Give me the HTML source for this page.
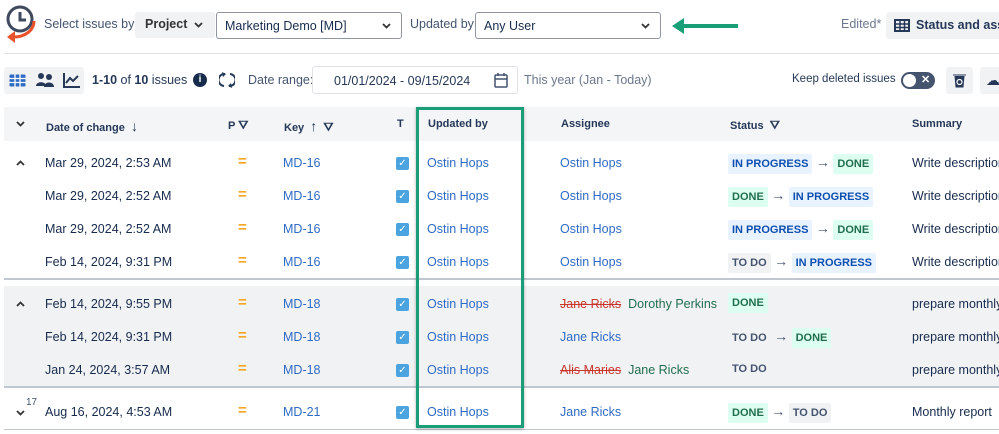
<!DOCTYPE html><html><head><style>
*{box-sizing:border-box;margin:0;padding:0}
body{width:999px;height:434px;overflow:hidden;background:#fff;font-family:"Liberation Sans",sans-serif;font-size:12.5px;color:#172b4d;position:relative}
.a{position:absolute;white-space:nowrap}
.lnk{color:#2f6bc4}
.dd{border:1px solid #8f96a3;border-radius:3px;height:27px;background:#fff}
.hd{font-weight:bold;font-size:11px;color:#253858}
.eq{color:#f5a623;font-weight:bold;font-size:15px}
.cb{width:13px;height:13px;background:#4ba4e0;border-radius:2px;color:#fff;font-size:10px;line-height:13px;text-align:center}
.lz{font-size:11px;font-weight:bold;padding:4px 4px;border-radius:2px}
.ip{background:#e9f2ff;color:#0c4fb0}
.dn{background:#dcfff1;color:#216e4e}
.td{background:#f1f2f4;color:#44546f}
.arr{color:#44546f;font-size:14px}
.strike{color:#c9372c;text-decoration:line-through}
.grn{color:#216e4e}
.pl{top:-2px}
</style></head><body>
<svg class="a" style="left:3px;top:3px" width="36" height="44" viewBox="0 0 36 44"><circle cx="17" cy="16" r="12" fill="none" stroke="#3f4a5e" stroke-width="3"/><path d="M17 9v8h6" stroke="#3f4a5e" stroke-width="3" fill="none"/><path d="M31 18c0 10-10 16-20 16" stroke="#e8532b" stroke-width="3" fill="none"/><path d="M4 34l8-6v12z" fill="#e8532b"/></svg>
<div class="a" style="left:44px;top:17px;color:#44546f">Select issues by:</div>
<div class="a" style="left:135px;top:12px;width:80px;height:26px;background:#f1f2f4;border-radius:3px"><span class="a" style="left:10px;top:5px;font-weight:bold;color:#333">Project</span><svg class="a" style="left:59px;top:10px" width="9" height="6"><path d="M1 1l3.5 3.5L8 1" stroke="#333" stroke-width="1.8" fill="none"/></svg></div>
<div class="a dd" style="left:216px;top:12px;width:186px"><span class="a" style="left:8px;top:6px">Marketing Demo [MD]</span><svg class="a" style="left:165px;top:10px" width="9" height="6"><path d="M1 1l3.5 3.5L8 1" stroke="#333" stroke-width="1.8" fill="none"/></svg></div>
<div class="a" style="left:410px;top:17px;color:#44546f">Updated by:</div>
<div class="a dd" style="left:475px;top:12px;width:186px"><span class="a" style="left:8px;top:6px">Any User</span><svg class="a" style="left:165px;top:10px" width="9" height="6"><path d="M1 1l3.5 3.5L8 1" stroke="#333" stroke-width="1.8" fill="none"/></svg></div>
<svg class="a" style="left:670px;top:16px" width="70" height="20"><path d="M10 10H68" stroke="#1a9e77" stroke-width="4"/><path d="M2 10l12-8v16z" fill="#1a9e77"/></svg>
<div class="a" style="left:841px;top:17px;color:#6b778c">Edited*</div>
<div class="a" style="left:886px;top:12px;width:120px;height:27px;background:#f1f2f4;border-radius:3px"><svg class="a" style="left:8px;top:7px" width="16" height="13"><rect x="1" y="1" width="14" height="11" fill="none" stroke="#253858" stroke-width="2"/><path d="M1 5h14M1 8.5h14M6 1v11M10.5 1v11" stroke="#253858" stroke-width="1.5"/></svg><span class="a" style="left:30px;top:6px;font-weight:bold;color:#253858">Status and assi</span></div>
<div class="a" style="left:4px;top:53px;width:995px;height:1px;background:#dfe1e6"></div>
<div class="a" style="left:4px;top:67px;width:80px;height:27px;background:#f1f2f4;border-radius:3px"></div>
<svg class="a" style="left:9px;top:74px" width="17" height="13"><rect x="0.5" y="0.5" width="16" height="12" rx="1" fill="#2f6bc4"/><path d="M0 4.5h17M0 8.5h17M6 0v13M11 0v13" stroke="#fff" stroke-width="1.3"/></svg>
<svg class="a" style="left:36px;top:72px" width="18" height="16"><circle cx="5" cy="4" r="3" fill="#253858"/><circle cx="13" cy="5" r="3" fill="#253858"/><path d="M0 14c0-5 10-5 10 0zM8 15c0-6 10-6 10 0z" fill="#253858"/></svg>
<svg class="a" style="left:63px;top:72px" width="18" height="16"><path d="M1 1v14h16" stroke="#253858" stroke-width="2" fill="none"/><path d="M3 11l4-5 3 3 5-5" stroke="#253858" stroke-width="2" fill="none"/></svg>
<div class="a" style="left:92px;top:73px;color:#253858"><b>1-10</b> of <b>10</b> issues</div>
<div class="a" style="left:193px;top:73px;width:14px;height:14px;border-radius:50%;background:#172b4d;color:#fff;font-size:10px;font-weight:bold;text-align:center;line-height:14px">i</div>
<svg class="a" style="left:219px;top:71px" width="16" height="18"><path d="M6 3A6 6 0 0 0 5 15M10 15A6 6 0 0 0 11 3" stroke="#253858" stroke-width="2" fill="none"/><path d="M3 1l4 2-3 3zM13 17l-4-2 3-3z" fill="#253858"/></svg>
<div class="a" style="left:248px;top:73px;color:#44546f">Date range:</div>
<div class="a" style="left:312px;top:66px;width:206px;height:28px;border:1px solid #dfe1e6;border-radius:3px"><span class="a" style="left:21px;top:7px;color:#253858">01/01/2024 - 09/15/2024</span><svg class="a" style="left:181px;top:6px" width="14" height="15"><rect x="1" y="2" width="12" height="12" rx="1" fill="none" stroke="#44546f" stroke-width="1.5"/><path d="M1 6h12M4 0v3M10 0v3" stroke="#44546f" stroke-width="1.5"/></svg></div>
<div class="a" style="left:524px;top:73px;color:#6b778c">This year (Jan - Today)</div>
<div class="a" style="left:792px;top:73px;color:#253858;font-size:11.5px">Keep deleted issues</div>
<div class="a" style="left:901px;top:72px;width:34px;height:17px;border-radius:9px;background:#44546f"><div class="a" style="left:2px;top:2px;width:13px;height:13px;border-radius:50%;background:#fff"></div><span class="a" style="left:20px;top:1px;color:#fff;font-size:11px;font-weight:bold">✕</span></div>
<div class="a" style="left:946px;top:67px;width:27px;height:27px;background:#f1f2f4;border-radius:3px"><svg class="a" style="left:7px;top:6px" width="13" height="15"><path d="M0 2h13M2 3l1 11h7l1-11" fill="#253858" stroke="#253858"/><circle cx="6.5" cy="9" r="2.5" fill="none" stroke="#fff" stroke-width="1.2"/></svg></div>
<div class="a" style="left:980px;top:67px;width:27px;height:27px;background:#f1f2f4;border-radius:3px"><span class="a" style="left:6px;top:5px;font-size:14px;color:#253858">☁</span></div>
<div class="a" style="left:4px;top:107px;width:995px;height:34px;background:#f4f5f7"></div>
<svg class="a" style="left:16px;top:121px" width="9" height="6"><path d="M1 1l3.5 3.5L8 1" stroke="#333" stroke-width="1.8" fill="none"/></svg>
<div class="a hd" style="left:46px;top:118px">Date of change&nbsp;&nbsp;<span style="font-size:14px">↓</span></div>
<div class="a hd" style="left:228px;top:118px">P <span style="font-size:12px">⛛</span></div>
<div class="a hd" style="left:284px;top:118px">Key&nbsp;&nbsp;<span style="font-size:14px">↑</span>&nbsp; <span style="font-size:12px">⛛</span></div>
<div class="a hd" style="left:397px;top:118px">T</div>
<div class="a hd" style="left:428px;top:118px">Updated by</div>
<div class="a hd" style="left:561px;top:118px">Assignee</div>
<div class="a hd" style="left:730px;top:118px">Status&nbsp; <span style="font-size:12px">⛛</span></div>
<div class="a hd" style="left:912px;top:118px">Summary</div>
<div class="a" style="left:4px;top:278px;width:995px;height:2px;background:#c1c7d0"></div>
<div class="a" style="left:4px;top:286px;width:995px;height:101px;background:#f1f2f4"></div>
<div class="a" style="left:4px;top:386px;width:995px;height:2px;background:#c1c7d0"></div>
<div class="a" style="left:4px;top:429px;width:995px;height:1px;background:#c1c7d0"></div>

<div class="a" style="top:156px;left:0;width:999px">
<svg class="a" style="left:16px;top:4px" width="9" height="6"><path d="M1 5l3.5-3.5L8 5" stroke="#333" stroke-width="1.8" fill="none"/></svg>
<span class="a" style="left:45px">Mar 29, 2024, 2:53 AM</span><span class="a eq" style="left:238px;top:-3px">=</span><span class="a lnk" style="left:283px">MD-16</span><span class="a cb" style="left:396px;top:1px">✓</span><span class="a lnk" style="left:427px">Ostin Hops</span><span class="a lnk" style="left:560px">Ostin Hops</span>
<span class="a pl" style="left:728px"><span class="lz ip">IN PROGRESS</span> <span class="arr">→</span> <span class="lz dn">DONE</span></span><span class="a" style="left:912px">Write description</span></div>
<div class="a" style="top:189px;left:0;width:999px">
<span class="a" style="left:45px">Mar 29, 2024, 2:52 AM</span><span class="a eq" style="left:238px;top:-3px">=</span><span class="a lnk" style="left:283px">MD-16</span><span class="a cb" style="left:396px;top:1px">✓</span><span class="a lnk" style="left:427px">Ostin Hops</span><span class="a lnk" style="left:560px">Ostin Hops</span>
<span class="a pl" style="left:728px"><span class="lz dn">DONE</span> <span class="arr">→</span> <span class="lz ip">IN PROGRESS</span></span><span class="a" style="left:912px">Write description</span></div>
<div class="a" style="top:222px;left:0;width:999px">
<span class="a" style="left:45px">Mar 29, 2024, 2:52 AM</span><span class="a eq" style="left:238px;top:-3px">=</span><span class="a lnk" style="left:283px">MD-16</span><span class="a cb" style="left:396px;top:1px">✓</span><span class="a lnk" style="left:427px">Ostin Hops</span><span class="a lnk" style="left:560px">Ostin Hops</span>
<span class="a pl" style="left:728px"><span class="lz ip">IN PROGRESS</span> <span class="arr">→</span> <span class="lz dn">DONE</span></span><span class="a" style="left:912px">Write description</span></div>
<div class="a" style="top:255px;left:0;width:999px">
<span class="a" style="left:45px">Feb 14, 2024, 9:31 PM</span><span class="a eq" style="left:238px;top:-3px">=</span><span class="a lnk" style="left:283px">MD-16</span><span class="a cb" style="left:396px;top:1px">✓</span><span class="a lnk" style="left:427px">Ostin Hops</span><span class="a lnk" style="left:560px">Ostin Hops</span>
<span class="a pl" style="left:728px"><span class="lz td">TO DO</span> <span class="arr">→</span> <span class="lz ip">IN PROGRESS</span></span><span class="a" style="left:912px">Write description</span></div>
<div class="a" style="top:297px;left:0;width:999px">
<svg class="a" style="left:16px;top:4px" width="9" height="6"><path d="M1 5l3.5-3.5L8 5" stroke="#333" stroke-width="1.8" fill="none"/></svg>
<span class="a" style="left:45px">Feb 14, 2024, 9:55 PM</span><span class="a eq" style="left:238px;top:-3px">=</span><span class="a lnk" style="left:283px">MD-18</span><span class="a cb" style="left:396px;top:1px">✓</span><span class="a lnk" style="left:427px">Ostin Hops</span><span class="a" style="left:560px"><span class="strike">Jane Ricks</span>&nbsp;&nbsp;<span class="grn">Dorothy Perkins</span></span>
<span class="a pl" style="left:728px"><span class="lz dn">DONE</span></span><span class="a" style="left:912px">prepare monthly</span></div>
<div class="a" style="top:330px;left:0;width:999px">
<span class="a" style="left:45px">Feb 14, 2024, 9:31 PM</span><span class="a eq" style="left:238px;top:-3px">=</span><span class="a lnk" style="left:283px">MD-18</span><span class="a cb" style="left:396px;top:1px">✓</span><span class="a lnk" style="left:427px">Ostin Hops</span><span class="a lnk" style="left:560px">Jane Ricks</span>
<span class="a pl" style="left:728px"><span class="lz td">TO DO</span> <span class="arr">→</span> <span class="lz dn">DONE</span></span><span class="a" style="left:912px">prepare monthly</span></div>
<div class="a" style="top:363px;left:0;width:999px">
<span class="a" style="left:45px">Jan 24, 2024, 3:57 AM</span><span class="a eq" style="left:238px;top:-3px">=</span><span class="a lnk" style="left:283px">MD-18</span><span class="a cb" style="left:396px;top:1px">✓</span><span class="a lnk" style="left:427px">Ostin Hops</span><span class="a" style="left:560px"><span class="strike">Alis Maries</span>&nbsp;&nbsp;<span class="grn">Jane Ricks</span></span>
<span class="a pl" style="left:728px"><span class="lz td">TO DO</span></span><span class="a" style="left:912px">prepare monthly</span></div>
<div class="a" style="top:405px;left:0;width:999px">
<svg class="a" style="left:16px;top:5px" width="9" height="6"><path d="M1 1l3.5 3.5L8 1" stroke="#333" stroke-width="1.8" fill="none"/></svg><span class="a" style="left:26px;top:-8px;font-size:10px;color:#44546f">17</span>
<span class="a" style="left:45px">Aug 16, 2024, 4:53 AM</span><span class="a eq" style="left:238px;top:-3px">=</span><span class="a lnk" style="left:283px">MD-21</span><span class="a cb" style="left:396px;top:1px">✓</span><span class="a lnk" style="left:427px">Ostin Hops</span><span class="a lnk" style="left:560px">Jane Ricks</span>
<span class="a pl" style="left:728px"><span class="lz dn">DONE</span> <span class="arr">→</span> <span class="lz td">TO DO</span></span><span class="a" style="left:912px">Monthly report</span></div>
<div class="a" style="left:416px;top:107px;width:108px;height:321px;border:3px solid #1a9e77;box-shadow:0 1px 3px rgba(0,0,0,.3)"></div>
</body></html>
